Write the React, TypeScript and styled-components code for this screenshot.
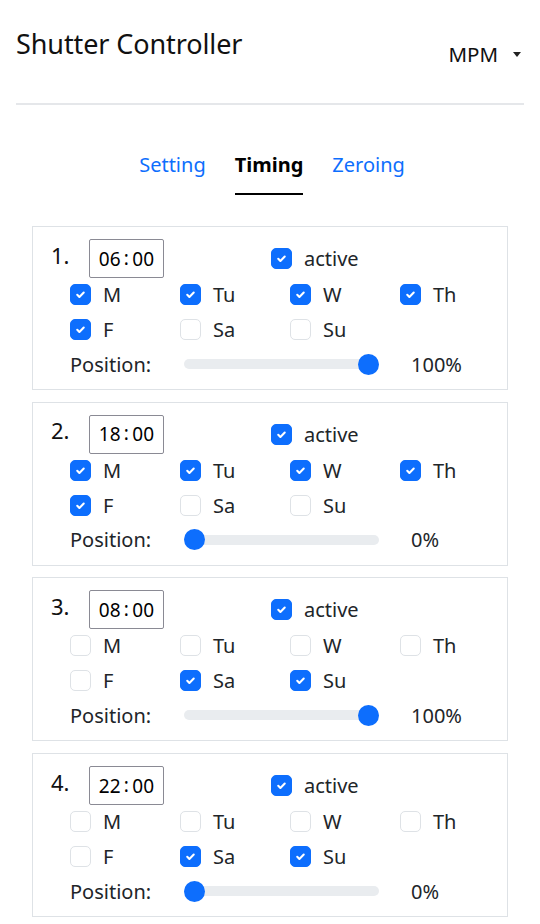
import React from "react";
import styled, { createGlobalStyle } from "styled-components";

const Global = createGlobalStyle`
  html, body { margin: 0; padding: 0; background: #fff; }
  body {
    font-family: "Noto Sans", "Open Sans", sans-serif;
    color: #212529;
    font-size: 20px;
  }
  * { box-sizing: border-box; }
`;

const Page = styled.div`
  width: 540px;
  padding: 0 16px;
`;

const Header = styled.header`
  display: flex;
  justify-content: space-between;
  align-items: flex-start;
  height: 105px;
  padding-top: 26px;
  border-bottom: 2px solid #e5e7ea;
`;

const Title = styled.h1`
  margin: 0;
  font-size: 27px;
  font-weight: 400;
  line-height: 36px;
  color: #111;
  letter-spacing: -0.1px;
`;

const Menu = styled.div`
  display: flex;
  align-items: center;
  gap: 15px;
  margin-top: 13px;
  margin-right: 3px;
  font-size: 20.5px;
  line-height: 30px;
  color: #111;
`;

const Caret = styled.span`
  width: 0;
  height: 0;
  border-left: 4.5px solid transparent;
  border-right: 4.5px solid transparent;
  border-top: 5px solid #222;
`;

const Tabs = styled.nav`
  display: flex;
  justify-content: center;
  gap: 29px;
  padding-top: 45px;
  margin-left: 4px;
`;

const Tab = styled.span<{ $active?: boolean }>`
  font-size: 20px;
  line-height: 30px;
  padding-bottom: 13px;
  color: ${(p) => (p.$active ? "#000" : "#0d6efd")};
  font-weight: ${(p) => (p.$active ? 700 : 400)};
  border-bottom: 2px solid ${(p) => (p.$active ? "#000" : "transparent")};
`;

const List = styled.div`
  display: flex;
  flex-direction: column;
  gap: 11.7px;
  padding: 31px 16px 0;
`;

const Card = styled.section`
  border: 1px solid #dee2e6;
  padding: 12px 18px 12px 18px;
  height: 164px;
`;

const TopRow = styled.div`
  display: grid;
  grid-template-columns: 220px 1fr;
  height: 39px;
  align-items: center;
`;

const Lead = styled.div`
  display: flex;
  align-items: center;
`;

const Num = styled.span`
  width: 38px;
  font-size: 22px;
  line-height: 30px;
  margin-top: -8px;
  color: #111;
`;

const TimeBox = styled.div`
  width: 75px;
  height: 39px;
  border: 1px solid #8a8a94;
  border-radius: 2px;
  display: flex;
  align-items: center;
  justify-content: center;
  font-size: 19px;
  color: #000;
  letter-spacing: 0.2px;
`;

const Colon = styled.span`
  margin: 0 3px;
  position: relative;
  top: -1px;
`;

const Check = styled.label`
  display: flex;
  align-items: center;
  gap: 12px;
  font-size: 20px;
  line-height: 21px;
  color: #212529;
`;

const Box = styled.span<{ $on: boolean }>`
  width: 21px;
  height: 21px;
  border-radius: 5px;
  border: 1px solid ${(p) => (p.$on ? "#0d6efd" : "#dee2e6")};
  background: ${(p) => (p.$on ? "#0d6efd" : "#fff")};
  display: flex;
  align-items: center;
  justify-content: center;
  flex: none;
`;

const Days = styled.div`
  display: grid;
  grid-template-columns: repeat(4, 110px);
  grid-auto-rows: 21px;
  row-gap: 14px;
  margin: 6px 0 0 19px;
`;

const PosRow = styled.div`
  display: flex;
  align-items: center;
  height: 26px;
  margin: 11px 0 0 19px;
  font-size: 20px;
`;

const PosLabel = styled.span`
  width: 114px;
  color: #212529;
`;

const Track = styled.div`
  position: relative;
  width: 195px;
  height: 10px;
  border-radius: 5px;
  background: #e9ecef;
`;

const Thumb = styled.span`
  position: absolute;
  top: 50%;
  width: 21px;
  height: 21px;
  margin-top: -10.5px;
  border-radius: 50%;
  background: #0d6efd;
`;

const Value = styled.span`
  margin-left: 32px;
  color: #212529;
`;

const Tick = () => (
  <svg width="13" height="13" viewBox="0 0 20 20">
    <path d="M5 10.5l3.3 3.3L15 7" fill="none" stroke="#fff" strokeWidth="3.2" strokeLinecap="round" strokeLinejoin="round" />
  </svg>
);

const CheckItem = ({ on, label }: { on: boolean; label: string }) => (
  <Check>
    <Box $on={on}>{on && <Tick />}</Box>
    {label}
  </Check>
);

const DAY_NAMES = ["M", "Tu", "W", "Th", "F", "Sa", "Su"];

type Timer = { h: string; m: string; days: boolean[]; pos: number };

const timers: Timer[] = [
  { h: "06", m: "00", days: [true, true, true, true, true, false, false], pos: 100 },
  { h: "18", m: "00", days: [true, true, true, true, true, false, false], pos: 0 },
  { h: "08", m: "00", days: [false, false, false, false, false, true, true], pos: 100 },
  { h: "22", m: "00", days: [false, false, false, false, false, true, true], pos: 0 },
];

export default function App() {
  return (
    <>
      <Global />
      <Page>
        <Header>
          <Title>Shutter Controller</Title>
          <Menu>
            MPM
            <Caret />
          </Menu>
        </Header>
        <Tabs>
          <Tab>Setting</Tab>
          <Tab $active>Timing</Tab>
          <Tab>Zeroing</Tab>
        </Tabs>
        <List>
          {timers.map((t, i) => (
            <Card key={i}>
              <TopRow>
                <Lead>
                  <Num>{i + 1}.</Num>
                  <TimeBox>
                    {t.h}
                    <Colon>:</Colon>
                    {t.m}
                  </TimeBox>
                </Lead>
                <CheckItem on label="active" />
              </TopRow>
              <Days>
                {DAY_NAMES.map((d, j) => (
                  <CheckItem key={d} on={t.days[j]} label={d} />
                ))}
              </Days>
              <PosRow>
                <PosLabel>Position:</PosLabel>
                <Track>
                  <Thumb style={{ left: `${(t.pos / 100) * (195 - 21)}px` }} />
                </Track>
                <Value>{t.pos}%</Value>
              </PosRow>
            </Card>
          ))}
        </List>
      </Page>
    </>
  );
}
